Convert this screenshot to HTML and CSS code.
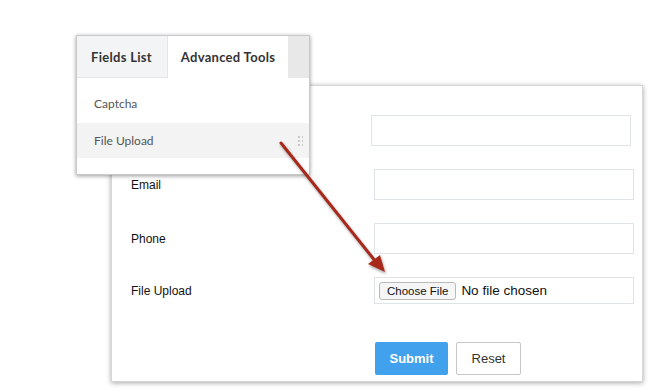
FILE: index.html
```html
<!DOCTYPE html>
<html lang="en">

<head>
    <meta charset="UTF-8">
    <meta name="viewport" content="width=device-width, initial-scale=1.0">
    <title>File Upload Field</title>
    <link rel="stylesheet" href="styles.css">
</head>

<body>
    <div class="stage">
        <form class="form-card">
            <div class="row">
                <span class="label"></span>
                <input class="field field-first" type="text" aria-label="Name">
            </div>
            <div class="row">
                <label class="label">Email</label>
                <input class="field" type="text">
            </div>
            <div class="row">
                <label class="label">Phone</label>
                <input class="field" type="text">
            </div>
            <div class="row row-file">
                <label class="label">File Upload</label>
                <div class="field file-box">
                    <span class="file-btn">Choose File</span>
                    <span class="file-name">No file chosen</span>
                </div>
            </div>
            <div class="actions">
                <button type="button" class="btn btn-submit">Submit</button>
                <button type="button" class="btn btn-reset">Reset</button>
            </div>
        </form>

        <div class="palette">
            <div class="tabs">
                <div class="tab">Fields List</div>
                <div class="tab active">Advanced Tools</div>
                <div class="tab-fill"></div>
            </div>
            <ul class="tools">
                <li class="tool">Captcha</li>
                <li class="tool hover">File Upload<span class="grip"></span></li>
            </ul>
        </div>

        <svg class="arrow" width="653" height="392" viewBox="0 0 653 392">
            <line x1="281" y1="143" x2="376" y2="262" stroke="#a8291b" stroke-width="3" stroke-linecap="round" />
            <polygon points="385,272 368,264 380,255" fill="#a8291b" />
        </svg>
    </div>
</body>

</html>
```

FILE: styles.css
```css
* {
    box-sizing: border-box;
}

body {
    margin: 0;
    background-color: #fff;
    font-family: 'Liberation Sans', Arial, sans-serif;
}

.stage {
    position: relative;
    width: 653px;
    height: 392px;
    overflow: hidden;
}

.form-card {
    margin: 85px 0 0 111px;
    width: 532px;
    height: 297px;
    padding: 29px 0 0 19px;
    background-color: #fff;
    border: 1px solid #d6d6d6;
    box-shadow: 0 1px 5px rgba(0, 0, 0, 0.35);
}

.row {
    display: grid;
    grid-template-columns: 243px 260px;
    align-items: center;
    height: 31px;
    margin-bottom: 23px;
}

.row-file {
    height: 27px;
    margin-bottom: 38px;
}

.label {
    font-size: 12px;
    color: #111;
}

.field {
    width: 260px;
    height: 100%;
    border: 1px solid #dfe4ea;
    background-color: #fff;
    outline: none;
}

.field-first {
    margin-left: -3px;
}

.file-box {
    display: flex;
    align-items: center;
    padding-left: 4px;
}

.file-btn {
    font-size: 11.5px;
    color: #111;
    padding: 2px 7px;
    border: 1px solid #b9b9b9;
    border-radius: 3px;
    background-color: #f6f6f6;
}

.file-name {
    font-size: 13.5px;
    color: #111;
    margin-left: 5px;
}

.actions {
    display: flex;
    gap: 8px;
    padding-left: 244px;
}

.btn {
    height: 33px;
    font-family: 'Liberation Sans', Arial, sans-serif;
    font-size: 13px;
    border-radius: 2px;
    cursor: pointer;
}

.btn-submit {
    width: 73px;
    border: none;
    background-color: #42a1ec;
    color: #fff;
    font-weight: bold;
}

.btn-reset {
    width: 65px;
    border: 1px solid #c6c6c6;
    background-color: #fff;
    color: #333;
}

/* floating field palette */
.palette {
    position: absolute;
    left: 76px;
    top: 35px;
    width: 234px;
    height: 140px;
    background-color: #fff;
    border: 1px solid #c9c9c9;
    box-shadow: 0 1px 4px rgba(0, 0, 0, 0.4);
    font-family: Lato, 'Open Sans', sans-serif;
}

.tabs {
    display: flex;
    height: 42px;
}

.tab {
    display: flex;
    align-items: center;
    width: 90px;
    padding: 0 0 0 14px;
    font-size: 13px;
    font-weight: bold;
    letter-spacing: 0.3px;
    color: #333;
    background-color: #f3f4f6;
    border-bottom: 1px solid #e4e4e4;
}

.tab.active {
    width: 121px;
    padding: 0;
    justify-content: center;
    background-color: #fff;
    border-left: 1px solid #e4e4e4;
    border-bottom: none;
}

.tab-fill {
    flex: 1;
    background-color: #e8e8e8;
}

.tools {
    list-style: none;
    margin: 0;
    padding: 0;
}

.tool {
    position: relative;
    display: flex;
    align-items: center;
    height: 45px;
    padding: 6px 0 0 17px;
    font-size: 12px;
    color: #555;
}

.tool.hover {
    height: 35px;
    padding-top: 0;
    background-color: #f3f3f3;
}

.grip {
    position: absolute;
    right: 6px;
    top: 12px;
    width: 6px;
    height: 11px;
    background-image: radial-gradient(circle, #c8c8c8 1px, transparent 1.3px);
    background-size: 4px 4px;
}

.arrow {
    position: absolute;
    left: 0;
    top: 0;
    pointer-events: none;
    filter: drop-shadow(1px 2px 1.5px rgba(0, 0, 0, 0.35));
}
```
